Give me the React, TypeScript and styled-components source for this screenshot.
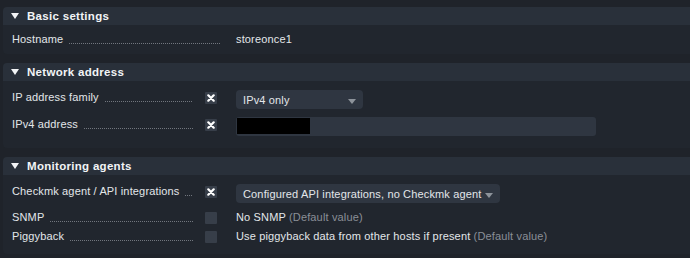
import styled, { createGlobalStyle } from "styled-components";

const GlobalStyle = createGlobalStyle`
    body {
        margin: 0;
        background: #1f232a;
        font-family: "Liberation Sans", Arial, sans-serif;
        font-size: 11px;
        color: #e3e6ea;
    }
`;
const Page = styled.div`
    padding: 7px 0 0 3px;
    display: flex;
    flex-direction: column;
    gap: 9px;
`;
const Section = styled.div`
    border-radius: 4px 0 0 4px;
    overflow: hidden;
`;
const Header = styled.div`
    height: 18px;
    background: #29303a;
    display: flex;
    align-items: center;
    padding-left: 8px;
    gap: 8px;
    font-weight: bold;
    font-size: 11.5px;
    letter-spacing: 0.3px;
    color: #f2f4f6;
`;
const Triangle = styled.span`
    width: 0;
    height: 0;
    border-left: 4px solid transparent;
    border-right: 4px solid transparent;
    border-top: 6px solid #f2f4f6;
`;
const Body = styled.div<{ $top: number; $bottom: number }>`
    background: #21262e;
    padding: ${(p) => p.$top}px 0 ${(p) => p.$bottom}px 9px;
`;
const Row = styled.div<{ $h: number }>`
    height: ${(p) => p.$h}px;
    display: flex;
    align-items: flex-start;
`;
const Label = styled.div<{ $w: number }>`
    width: ${(p) => p.$w}px;
    height: 14px;
    display: flex;
    white-space: nowrap;
    line-height: 14px;
    letter-spacing: 0.15px;
`;
const Dots = styled.span`
    flex: 1;
    margin: 0 0 2px 6px;
    background-image: linear-gradient(to right, #71767e 1px, transparent 1px);
    background-size: 2px 1px;
    background-repeat: repeat-x;
    background-position: left bottom;
`;
const Check = styled.div`
    width: 12px;
    height: 12px;
    margin: 2px 19px 0 12px;
    background: #373e49;
    border-radius: 1px;
    display: flex;
    align-items: center;
    justify-content: center;
`;
const Spacer = styled.div`
    width: 16px;
`;
const Value = styled.div`
    line-height: 14px;
    white-space: nowrap;
    letter-spacing: 0.15px;
`;
const Default = styled.span`
    color: #8a8f97;
`;
const Select = styled.div<{ $w: number }>`
    width: ${(p) => p.$w}px;
    height: 19px;
    box-sizing: border-box;
    background: #2f3641;
    border-radius: 4px;
    display: flex;
    align-items: center;
    justify-content: space-between;
    padding: 0 7px;
    white-space: nowrap;
    letter-spacing: 0.15px;
`;
const Arrow = styled.span`
    width: 0;
    height: 0;
    margin-top: 3px;
    border-left: 4px solid transparent;
    border-right: 4px solid transparent;
    border-top: 5px solid #8d939b;
`;
const Input = styled.div`
    width: 360px;
    height: 19px;
    box-sizing: border-box;
    background: #2f3641;
    border-radius: 3px;
    padding: 1px;
`;
const Redacted = styled.div`
    width: 73px;
    height: 16px;
    background: #000;
`;

function XMark() {
    return (
        <svg width="8" height="8" viewBox="0 0 8 8">
            <path d="M1.3 1.3 L6.7 6.7 M6.7 1.3 L1.3 6.7" stroke="#fff" strokeWidth="2.2" strokeLinecap="round" />
        </svg>
    );
}

function Title({ text, w }: { text: string; w: number }) {
    return (
        <Label $w={w}>
            {text}
            <Dots />
        </Label>
    );
}

export default function App() {
    return (
        <>
            <GlobalStyle />
            <Page>
                <Section>
                    <Header><Triangle />Basic settings</Header>
                    <Body $top={7} $bottom={3}>
                        <Row $h={19}>
                            <Title text="Hostname" w={208} />
                            <Spacer />
                            <Value>storeonce1</Value>
                        </Row>
                    </Body>
                </Section>
                <Section>
                    <Header><Triangle />Network address</Header>
                    <Body $top={9} $bottom={12}>
                        <Row $h={27}>
                            <Title text="IP address family" w={181} />
                            <Check><XMark /></Check>
                            <Select $w={127}>IPv4 only<Arrow /></Select>
                        </Row>
                        <Row $h={19}>
                            <Title text="IPv4 address" w={181} />
                            <Check><XMark /></Check>
                            <Input><Redacted /></Input>
                        </Row>
                    </Body>
                </Section>
                <Section>
                    <Header><Triangle />Monitoring agents</Header>
                    <Body $top={9} $bottom={6}>
                        <Row $h={26}>
                            <Title text="Checkmk agent / API integrations" w={181} />
                            <Check><XMark /></Check>
                            <Select $w={264}>Configured API integrations, no Checkmk agent<Arrow /></Select>
                        </Row>
                        <Row $h={19}>
                            <Title text="SNMP" w={181} />
                            <Check />
                            <Value>No SNMP <Default>(Default value)</Default></Value>
                        </Row>
                        <Row $h={19}>
                            <Title text="Piggyback" w={181} />
                            <Check />
                            <Value>Use piggyback data from other hosts if present <Default>(Default value)</Default></Value>
                        </Row>
                    </Body>
                </Section>
            </Page>
        </>
    );
}
